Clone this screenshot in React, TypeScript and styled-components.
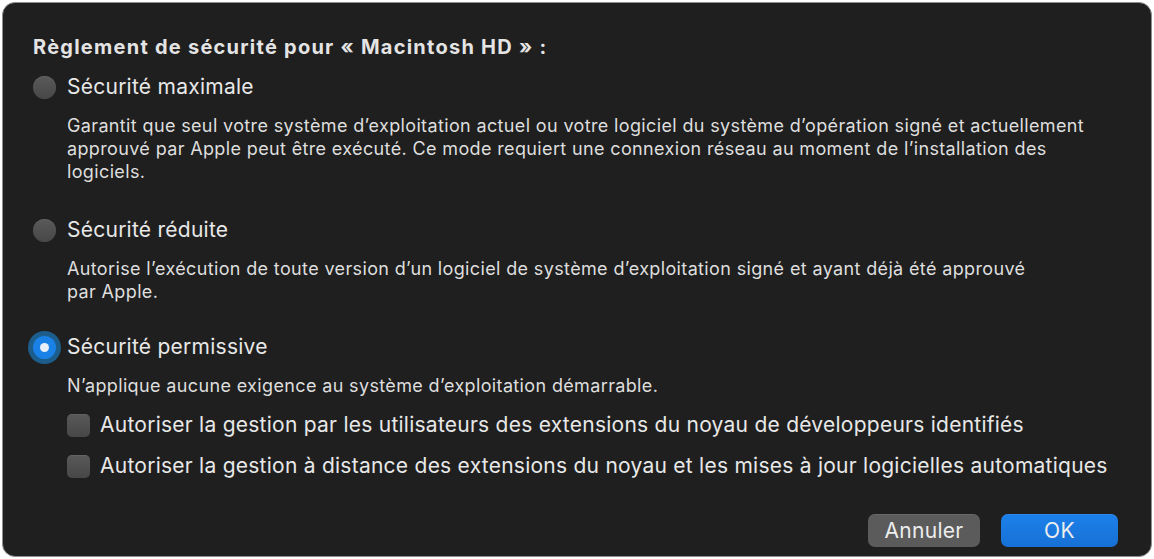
import React from "react";
import styled, { createGlobalStyle } from "styled-components";

const Global = createGlobalStyle`
  html, body { margin: 0; padding: 0; background: #ffffff; }
  body { font-family: "Inter", "Liberation Sans", sans-serif; -webkit-font-smoothing: antialiased; }
  * { box-sizing: border-box; }
`;

const Window = styled.div`
  margin: 2px;
  width: 1150px;
  height: 555px;
  background: #1f1f1f;
  border: 1px solid #8e8e8e;
  border-radius: 13px;
  padding: 33px 33px 9px 30px;
  display: flex;
  flex-direction: column;
  color: #e6e6e6;
`;

const Title = styled.div`
  font-size: 20px;
  font-weight: 700;
  line-height: 22px;
  letter-spacing: 1.25px;
  color: #e4e4e4;
  white-space: nowrap;
`;

const Option = styled.div<{ $gap: number }>`
  margin-top: ${(p) => p.$gap}px;
  display: flex;
  flex-direction: column;
`;

const OptionRow = styled.label`
  display: flex;
  align-items: center;
  gap: 11px;
  height: 24px;
`;

const Radio = styled.span<{ $checked?: boolean }>`
  width: 23px;
  height: 23px;
  border-radius: 50%;
  flex: none;
  display: flex;
  align-items: center;
  justify-content: center;
  background: ${(p) =>
    p.$checked ? "#1a82e6" : "linear-gradient(#5a5a5a, #474747)"};
  box-shadow: ${(p) =>
    p.$checked ? "0 0 0 5px #1c5d8c" : "inset 0 0.5px 0 rgba(255,255,255,0.12)"};
  &::after {
    content: "";
    display: ${(p) => (p.$checked ? "block" : "none")};
    width: 9px;
    height: 9px;
    border-radius: 50%;
    background: #e8effa;
  }
`;

const OptionLabel = styled.span`
  font-size: 21px;
  line-height: 24px;
  color: #e8e8e8;
  letter-spacing: 0.25px;
  white-space: nowrap;
`;

const Description = styled.p`
  margin: 15px 0 0 34px;
  font-size: 18px;
  line-height: 23px;
  color: #dedede;
  letter-spacing: 0.36px;
  white-space: nowrap;
`;

const Checks = styled.div`
  margin: 16px 0 0 34px;
  display: flex;
  flex-direction: column;
  gap: 17px;
`;

const CheckRow = styled.label`
  display: flex;
  align-items: center;
  gap: 10px;
  height: 24px;
`;

const Checkbox = styled.span`
  width: 23px;
  height: 23px;
  border-radius: 5px;
  flex: none;
  background: linear-gradient(#595959, #474747);
  box-shadow: inset 0 0.5px 0 rgba(255,255,255,0.12);
`;

const Footer = styled.div`
  margin-top: auto;
  display: flex;
  justify-content: flex-end;
  gap: 21px;
`;

const Button = styled.button<{ $primary?: boolean }>`
  height: 33px;
  width: ${(p) => (p.$primary ? 117 : 112)}px;
  border: none;
  border-radius: 7px;
  font-family: inherit;
  font-size: 21px;
  letter-spacing: 0.3px;
  color: #ededed;
  background: ${(p) =>
    p.$primary ? "linear-gradient(#1c80ea, #1771d6)" : "#5b5b5b"};
  box-shadow: inset 0 0.5px 0 rgba(255,255,255,0.15);
  padding: 0;
`;

export default function App() {
  return (
    <>
      <Global />
      <Window>
        <Title>Règlement de sécurité pour « Macintosh HD » :</Title>
        <Option $gap={17}>
          <OptionRow>
            <Radio />
            <OptionLabel>Sécurité maximale</OptionLabel>
          </OptionRow>
          <Description>
            Garantit que seul votre système d’exploitation actuel ou votre logiciel du système d’opération signé et actuellement
            <br />
            approuvé par Apple peut être exécuté. Ce mode requiert une connexion réseau au moment de l’installation des
            <br />
            logiciels.
          </Description>
        </Option>
        <Option $gap={35}>
          <OptionRow>
            <Radio />
            <OptionLabel>Sécurité réduite</OptionLabel>
          </OptionRow>
          <Description>
            Autorise l’exécution de toute version d’un logiciel de système d’exploitation signé et ayant déjà été approuvé
            <br />
            par Apple.
          </Description>
        </Option>
        <Option $gap={32}>
          <OptionRow>
            <Radio $checked />
            <OptionLabel>Sécurité permissive</OptionLabel>
          </OptionRow>
          <Description>N’applique aucune exigence au système d’exploitation démarrable.</Description>
          <Checks>
            <CheckRow>
              <Checkbox />
              <OptionLabel>
                Autoriser la gestion par les utilisateurs des extensions du noyau de développeurs identifiés
              </OptionLabel>
            </CheckRow>
            <CheckRow>
              <Checkbox />
              <OptionLabel>
                Autoriser la gestion à distance des extensions du noyau et les mises à jour logicielles automatiques
              </OptionLabel>
            </CheckRow>
          </Checks>
        </Option>
        <Footer>
          <Button>Annuler</Button>
          <Button $primary>OK</Button>
        </Footer>
      </Window>
    </>
  );
}
